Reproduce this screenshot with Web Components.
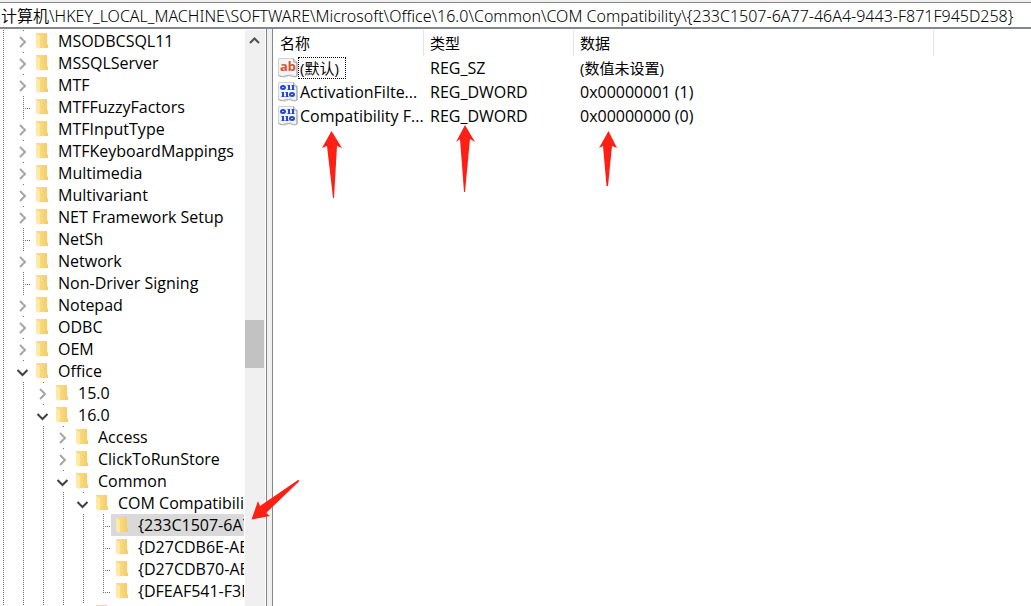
<!DOCTYPE html>
<html lang="zh-CN">
<head>
<meta charset="utf-8">
<title>注册表编辑器</title>
<style>
html, body { height: 100%; margin: 0; }
body { font: 16px/22px "Open Sans", "Noto Sans CJK SC", sans-serif; color: #000; background: #fff; overflow: hidden; }
</style>
</head>
<body>
<registry-editor></registry-editor>
<script>
const define = (name, html, init) => customElements.define(name, class extends HTMLElement {
  connectedCallback() {
    if (this.shadowRoot) return;
    this.attachShadow({ mode: "open" }).innerHTML = typeof html === "function" ? html(this) : html;
    if (init) init(this, this.shadowRoot);
  }
});

define("folder-icon", `
<style>:host { display: block; flex: none; width: 16px; height: 18px; } svg { display: block; }</style>
<svg width="16" height="18" viewBox="0 0 16 18" aria-hidden="true">
  <defs><linearGradient id="g" x1="0" x2="1"><stop offset="0" stop-color="#fde08a"/><stop offset="1" stop-color="#f3cb66"/></linearGradient></defs>
  <path d="M1 1H11V12L12 13V16H4L2 14Z" fill="url(#g)"/>
  <path d="M0 1.500L4 4V15L3 17.500L0 15Z" fill="#ffe9a6"/>
  <path d="M0 1H3L4 4L0 2Z" fill="#f8d984"/>
</svg>`);

define("value-icon", el => `
<style>
:host { display: block; flex: none; width: 20px; height: 20px; }
svg { display: block; }
text { font: bold 13px "Noto Sans", sans-serif; fill: #d9532c; }
</style>
<svg width="20" height="20" viewBox="0 0 20 20" aria-hidden="true">
  <path d="M.5 .5H15.500L19 4V18Q17 19.500 14.500 17.500T9.500 18T4.500 18.500T.5 17.500Z" fill="#f3f4f6" stroke="#cfd2d7"/>
  <path d="M15.500 .5L16 4L19 4.500V18" fill="none" stroke="#979da6"/>
  <path d="M.5 17.500Q3 19.500 5.500 18.500T10 17.500T14.500 18.500T19 18" fill="none" stroke="#a5abb4"/>
  ${el.getAttribute("kind") === "string"
    ? `<text x="2" y="13">ab</text>`
    : `<g fill="none" stroke="#2647d8" stroke-width="2">
        <ellipse cx="5" cy="5.500" rx="2" ry="1.500"/><path d="M11 3V8M15 3V8M5 10V15M9 10V15"/>
        <ellipse cx="14" cy="12.500" rx="2" ry="1.500"/><path d="M9.500 3.500H11M13.500 3.500H15M3.500 10.500H5M7.500 10.500H9M9.500 7.500H12.500M13.500 7.500H16.500M3.500 14.500H6.500M7.500 14.500H10.500" stroke-width="1"/></g>`}
</svg>`);

/* One key of the tree: guides of the levels above, the expander, the folder and its name. */
define("tree-key", el => {
  const depth = +el.getAttribute("depth"), state = el.getAttribute("state");
  const guides = `<i class="guide"></i>`.repeat(depth);
  const expander = state === "closed" || state === "open"
    ? `<button type="button" tabindex="-1" aria-label="${state === "open" ? "折叠" : "展开"}"><svg width="14" height="14" viewBox="0 0 14 14">
       <path d="${state === "open" ? "M1.500 5L6.500 10L11.500 5" : "M4 2L9 7L4 12"}" fill="none" stroke="${state === "open" ? "#404040" : "#a6a6a6"}" stroke-width="2"/></svg></button>`
    : "";
  return `
<style>
:host { --dots: repeating-linear-gradient(#707070 0 1px, #fff 1px 2px); display: flex; height: 22px; white-space: nowrap; }
.root, .guide { flex: none; background: var(--dots) 10px 0 / 1px 100% no-repeat; }
.root { width: 13px; background-position: 3px 0; }
.guide { width: 20px; }
.branch { flex: none; display: flex; width: 18px; }
.branch.closed, .branch.open { background: linear-gradient(#707070, #707070) 10px 0 / 1px 1px no-repeat; }
.branch.leaf, .branch.last { background: var(--dots) 10px 0 / 1px 100% no-repeat,
  repeating-linear-gradient(90deg, #707070 0 1px, #fff 1px 2px) 12px 12px / 6px 1px no-repeat; }
.branch.last { background-size: 1px 13px, 6px 1px; }
button { width: 14px; height: 14px; margin: 5px 0 0 3px; padding: 0; border: 0; background: none; }
svg { display: block; }
.name { flex: auto; display: flex; gap: 6px; padding-left: 5px; }
folder-icon { margin-top: 2px; }
:host([selected]) .name { background: #d9d9d9; }
</style>
<i class="root"></i>${guides}<span class="branch ${state}">${expander}</span>
<span class="name"><folder-icon></folder-icon><slot></slot></span>`;
}, el => {
  el.setAttribute("role", "treeitem");
  el.setAttribute("aria-level", +el.getAttribute("depth") + 1);
});

const KEYS = [
  [0, "closed", "MSODBCSQL11"], [0, "closed", "MSSQLServer"], [0, "closed", "MTF"], [0, "leaf", "MTFFuzzyFactors"],
  [0, "closed", "MTFInputType"], [0, "closed", "MTFKeyboardMappings"], [0, "closed", "Multimedia"], [0, "closed", "Multivariant"],
  [0, "closed", "NET Framework Setup"], [0, "leaf", "NetSh"], [0, "closed", "Network"], [0, "leaf", "Non-Driver Signing"],
  [0, "closed", "Notepad"], [0, "closed", "ODBC"], [0, "closed", "OEM"], [0, "open", "Office"],
  [1, "closed", "15.0"], [1, "open", "16.0"], [2, "closed", "Access"], [2, "closed", "ClickToRunStore"],
  [2, "open", "Common"], [3, "open", "COM Compatibility"],
  [4, "leaf", "{233C1507-6A7", "selected"], [4, "leaf", "{D27CDB6E-AE"], [4, "leaf", "{D27CDB70-AE"],
  [4, "last", "{DFEAF541-F3E"], [3, "closed", ""]
];

define("key-tree", `
<style>
:host { display: flex; min-height: 0; overflow: hidden; border-right: 1px solid #828790; }
.keys { flex: auto; min-width: 0; overflow: hidden; margin-right: 1px; padding-top: 1px; }
.bar { flex: none; position: relative; width: 20px; margin: 1px 1px 0 0; background: #f0f0f0; }
.bar button { display: block; width: 20px; height: 20px; padding: 0; border: 0; background: none; }
.bar svg { display: block; }
.thumb { position: absolute; top: 50.400%; left: 0; width: 19px; height: 48px; background: #c2c2c2; }
</style>
<div class="keys" role="tree" aria-label="注册表项">
${KEYS.map(([d, s, n, sel]) => `<tree-key depth="${d}" state="${s}" ${sel || ""}>${n}</tree-key>`).join("")}
</div>
<div class="bar"><button type="button" aria-label="向上滚动"><svg width="20" height="20" viewBox="0 0 20 20"><path d="M5 13L9.500 8.500L14 13" fill="none" stroke="#505050" stroke-width="2"/></svg></button><div class="thumb"></div></div>`);

define("value-list", `
<style>
:host { display: block; overflow: hidden; border-left: 1px solid #828790; padding-top: 1px; }
table { width: 100%; table-layout: fixed; border-collapse: separate; border-spacing: 0; }
.c1 { width: 151px; } .c2 { width: 150px; } .c3 { width: 360px; }
th, td { padding: 0 0 0 6px; text-align: left; font-weight: 400; white-space: nowrap; overflow: hidden; }
th { height: 26px; font-size: 15px; border-right: 1px solid #e5e5e5; }
th:first-child { padding-left: 7px; }
th:last-child { border-right: 0; }
td { height: 24px; }
td:first-child { padding-left: 5px; }
.name { display: flex; align-items: center; height: 24px; }
.name span { padding-left: 2px; }
.name .focus { padding: 0 7px 0 2px; outline: 1px dotted #000; outline-offset: -1px; font-size: 15px; }
.cjk { font-size: 15px; }
</style>
<table>
<colgroup><col class="c1"><col class="c2"><col class="c3"><col></colgroup>
<thead><tr><th scope="col">名称</th><th scope="col">类型</th><th scope="col">数据</th><th></th></tr></thead>
<tbody>
<tr><td><div class="name"><value-icon kind="string"></value-icon><span class="focus">(默认)</span></div></td><td>REG_SZ</td><td class="cjk">(数值未设置)</td><td></td></tr>
<tr><td><div class="name"><value-icon kind="binary"></value-icon><span>ActivationFilte...</span></div></td><td>REG_DWORD</td><td>0x00000001 (1)</td><td></td></tr>
<tr><td><div class="name"><value-icon kind="binary"></value-icon><span>Compatibility F...</span></div></td><td>REG_DWORD</td><td>0x00000000 (0)</td><td></td></tr>
</tbody>
</table>`);

define("red-arrows", `
<style>:host { position: absolute; top: 0; left: 0; pointer-events: none; } svg { display: block; }</style>
<svg width="660" height="540" viewBox="0 0 660 540" fill="#ff2015" aria-hidden="true">
  <path d="M331.500 131L342 148L337 146L334 198H333L327 146L322 148Z"/>
  <path d="M465 125L475 142L470 139L465 192H464L460 139L456 142Z"/>
  <path d="M608.500 131L617 148L612 146L608 186H606.500L603 146L599 148Z"/>
  <path d="M251.500 519.500L258 501L260 506L298 480Q300 480 298.500 482L266 513L270 516Z"/>
</svg>`);

define("registry-editor", `
<style>
:host { display: flex; flex-direction: column; height: 100vh; position: relative; background: #fff; }
.address { flex: none; border-top: 2px solid #f0f0f0; }
input { display: block; box-sizing: border-box; width: 100%; height: 27px; margin: 0; padding: 0 0 0 1px; border: 0; border-top: 1px solid #868686; border-bottom: 2px solid #828790; border-radius: 0; background: #fff; color: #000; font: inherit; font-family: "Noto Sans", "Noto Sans CJK SC", sans-serif; font-weight: 350; outline: 0; }
.panes { flex: auto; min-height: 0; display: grid; grid-template-columns: 267px minmax(0, 1fr); column-gap: 5px; background: #f0f0f0; }
key-tree, value-list { background: #fff; }
</style>
<div class="address"><input type="text" aria-label="地址" value="计算机\\HKEY_LOCAL_MACHINE\\SOFTWARE\\Microsoft\\Office\\16.0\\Common\\COM Compatibility\\{233C1507-6A77-46A4-9443-F871F945D258}"></div>
<div class="panes"><key-tree></key-tree><value-list></value-list></div>
<red-arrows></red-arrows>`);
</script>
</body>
</html>
